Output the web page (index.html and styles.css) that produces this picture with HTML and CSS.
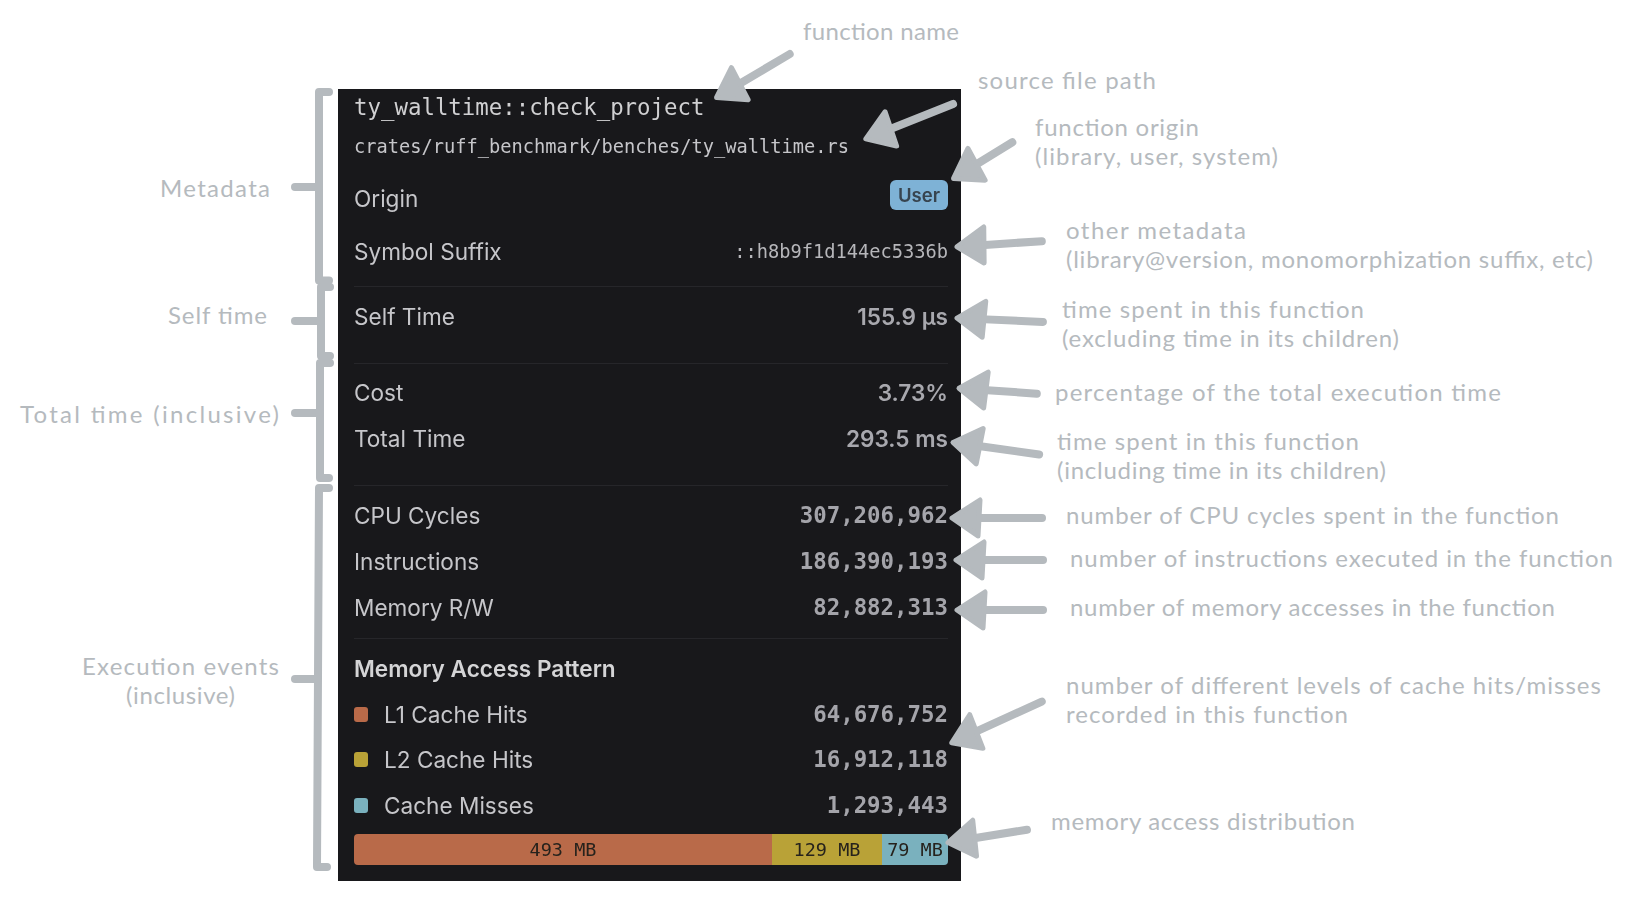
FILE: index.html
```html
<!DOCTYPE html>
<html lang="en">
<head>
<meta charset="utf-8">
<title>Function details annotated</title>
<link rel="stylesheet" href="styles.css">
</head>
<body>
<main class="stage">
  <section class="panel">
    <header class="block head">
      <div class="fn-name">ty_walltime::check_project</div>
      <div class="fn-path">crates/ruff_benchmark/benches/ty_walltime.rs</div>
    </header>
    <div class="row row-origin"><span>Origin</span><span class="badge">User</span></div>
    <div class="row row-suffix"><span>Symbol Suffix</span><span class="mono-sm">::h8b9f1d144ec5336b</span></div>
    <div class="block self">
      <div class="row"><span>Self Time</span><span class="val">155.9 µs</span></div>
    </div>
    <div class="block total">
      <div class="row"><span>Cost</span><span class="val">3.73%</span></div>
      <div class="row"><span>Total Time</span><span class="val">293.5 ms</span></div>
    </div>
    <div class="block events">
      <div class="row"><span>CPU Cycles</span><span class="num">307,206,962</span></div>
      <div class="row"><span>Instructions</span><span class="num">186,390,193</span></div>
      <div class="row"><span>Memory R/W</span><span class="num">82,882,313</span></div>
    </div>
    <div class="block memory">
      <h2 class="mem-title">Memory Access Pattern</h2>
      <div class="row row-l1"><span class="key"><i class="swatch c-l1"></i>L1 Cache Hits</span><span class="num">64,676,752</span></div>
      <div class="row"><span class="key"><i class="swatch c-l2"></i>L2 Cache Hits</span><span class="num">16,912,118</span></div>
      <div class="row"><span class="key"><i class="swatch c-miss"></i>Cache Misses</span><span class="num">1,293,443</span></div>
      <div class="bar">
        <span class="seg c-l1 s-l1">493 MB</span>
        <span class="seg c-l2 s-l2">129 MB</span>
        <span class="seg c-miss s-miss">79 MB</span>
      </div>
    </div>
  </section>

  <svg class="notes" width="1632" height="900" viewBox="0 0 1632 900">
    <defs>
      <polygon id="head" points="3,0 31,-18 29,18"/>
    </defs>
    <g class="brackets">
      <path d="M329 92H319V280.5H329"/>
      <path d="M295 187H319"/>
      <path d="M330 287H321V356H330"/>
      <path d="M295 321H321"/>
      <path d="M330 363H320V478H329"/>
      <path d="M295 413H320"/>
      <path d="M329 488H319L317 867H327"/>
      <path d="M295 679H317"/>
    </g>
    <g class="arrows">
      <g transform="translate(714 99) rotate(-30.7)"><line x1="20" y1="0" x2="88" y2="0"/><use href="#head"/></g>
      <g transform="translate(863 140) rotate(-21.8)"><line x1="20" y1="0" x2="97" y2="0"/><use href="#head"/></g>
      <g transform="translate(951 180) rotate(-31.6)"><line x1="20" y1="0" x2="72" y2="0"/><use href="#head"/></g>
      <g transform="translate(954 247) rotate(-3.8)"><line x1="20" y1="0" x2="88" y2="0"/><use href="#head"/></g>
      <g transform="translate(954 318) rotate(2.5)"><line x1="20" y1="0" x2="89" y2="0"/><use href="#head"/></g>
      <g transform="translate(956 388) rotate(4)"><line x1="20" y1="0" x2="81" y2="0"/><use href="#head"/></g>
      <g transform="translate(950 442) rotate(8)"><line x1="20" y1="0" x2="90" y2="0"/><use href="#head"/></g>
      <g transform="translate(949 518)"><line x1="20" y1="0" x2="93" y2="0"/><use href="#head"/></g>
      <g transform="translate(953 560)"><line x1="20" y1="0" x2="90" y2="0"/><use href="#head"/></g>
      <g transform="translate(954 610)"><line x1="20" y1="0" x2="89" y2="0"/><use href="#head"/></g>
      <g transform="translate(949 744) rotate(-24.6)"><line x1="20" y1="0" x2="102" y2="0"/><use href="#head"/></g>
      <g transform="translate(945 843) rotate(-9.2)"><line x1="20" y1="0" x2="83" y2="0"/><use href="#head"/></g>
    </g>
    <g class="hand">
      <text x="160" y="197" textLength="110">Metadata</text>
      <text x="168" y="324" textLength="99">Self time</text>
      <text x="20" y="423" textLength="259">Total time (inclusive)</text>
      <text x="82" y="675" textLength="197">Execution events</text>
      <text x="126" y="704" textLength="109">(inclusive)</text>

      <text x="803" y="40" textLength="156">function name</text>
      <text x="978" y="89" textLength="178">source file path</text>
      <text x="1035" y="136" textLength="164">function origin</text>
      <text x="1035" y="165" textLength="243">(library, user, system)</text>
      <text x="1066" y="239" textLength="180">other metadata</text>
      <text x="1066" y="268" textLength="527">(library@version, monomorphization suffix, etc)</text>
      <text x="1062" y="318" textLength="302">time spent in this function</text>
      <text x="1062" y="347" textLength="337">(excluding time in its children)</text>
      <text x="1055" y="401" textLength="446">percentage of the total execution time</text>
      <text x="1057" y="450" textLength="302">time spent in this function</text>
      <text x="1057" y="479" textLength="329">(including time in its children)</text>
      <text x="1066" y="524" textLength="493">number of CPU cycles spent in the function</text>
      <text x="1070" y="567" textLength="543">number of instructions executed in the function</text>
      <text x="1070" y="616" textLength="485">number of memory accesses in the function</text>
      <text x="1066" y="694" textLength="535">number of different levels of cache hits/misses</text>
      <text x="1066" y="723" textLength="282">recorded in this function</text>
      <text x="1051" y="830" textLength="304">memory access distribution</text>
    </g>
  </svg>
</main>
</body>
</html>
```
FILE: styles.css
```css
* { box-sizing: border-box; }
html, body { margin: 0; background: #ffffff; }
.stage {
  position: relative;
  width: 1632px;
  height: 900px;
  overflow: hidden;
  padding: 89px 0 0 338px;
}
.panel {
  width: 623px;
  height: 792px;
  padding: 0 13px 0 16px;
  background: #18181b;
  color: #c6c6ca;
  font-family: Inter, "Liberation Sans", sans-serif;
  font-size: 22.6px;
  filter: blur(0.35px);
}
.block + .block, .row-suffix + .block { border-top: 1px solid #26262a; }
.head { padding-top: 4px; }
.fn-name {
  height: 28px;
  line-height: 28px;
  font-family: "DejaVu Sans Mono", monospace;
  font-size: 22.4px;
  color: #d0d0d2;
}
.fn-path {
  height: 24px;
  margin-top: 14px;
  line-height: 24px;
  font-family: "DejaVu Sans Mono", monospace;
  font-size: 18.7px;
  color: #c6c6ca;
}
.row {
  display: flex;
  justify-content: space-between;
  align-items: center;
  height: 46px;
}
.row-origin { height: 52px; margin-top: 13px; }
.row-suffix { height: 54px; margin-bottom: 8px; }
.badge {
  display: flex;
  align-items: center;
  justify-content: center;
  width: 58px;
  height: 30px;
  margin-bottom: 6px;
  border-radius: 6px;
  background: #7eb2d6;
  color: #37444f;
  font-size: 18.5px;
  font-weight: 600;
}
.mono-sm {
  font-family: "DejaVu Sans Mono", monospace;
  font-size: 18.7px;
  color: #b6b6ba;
}
.val { font-weight: 600; color: #a8a8ae; }
.num {
  font-family: "DejaVu Sans Mono", monospace;
  font-size: 22.4px;
  font-weight: 700;
  color: #a4a4aa;
}
.self { padding: 6px 0 24px; }
.total { padding: 5px 0 24px; }
.events { padding: 6px 0 8px; }
.memory { padding-top: 7px; }
.mem-title {
  margin: 0;
  height: 46px;
  line-height: 46px;
  font-size: 22.6px;
  font-weight: 600;
  color: #d4d4d6;
}
.row-l1 { height: 44px; }
.key { display: flex; align-items: center; gap: 16px; }
.swatch { display: block; width: 14px; height: 15px; border-radius: 3px; }
.c-l1 { background: #b96a49; }
.c-l2 { background: #b9a237; }
.c-miss { background: #7ab1be; }
.bar {
  display: flex;
  height: 31px;
  margin-top: 6px;
  overflow: hidden;
  border-radius: 4px;
  font-family: "DejaVu Sans Mono", monospace;
  font-size: 18.5px;
  color: #26221c;
}
.seg { display: flex; align-items: center; justify-content: center; }
.s-l1 { width: 418px; }
.s-l2 { width: 110px; }
.s-miss { width: 66px; }

.notes { position: absolute; left: 0; top: 0; }
.brackets path {
  fill: none;
  stroke: #b5babe;
  stroke-width: 8;
  stroke-linecap: round;
  stroke-linejoin: round;
}
.arrows line {
  stroke: #b5babe;
  stroke-width: 8;
  stroke-linecap: round;
}
.arrows use {
  fill: #b5babe;
  stroke: #b5babe;
  stroke-width: 5;
  stroke-linejoin: round;
}
.hand text {
  font-family: Lato, "Open Sans", sans-serif;
  font-size: 24px;
  font-weight: 400;
  fill: #b5babe;
}
```
